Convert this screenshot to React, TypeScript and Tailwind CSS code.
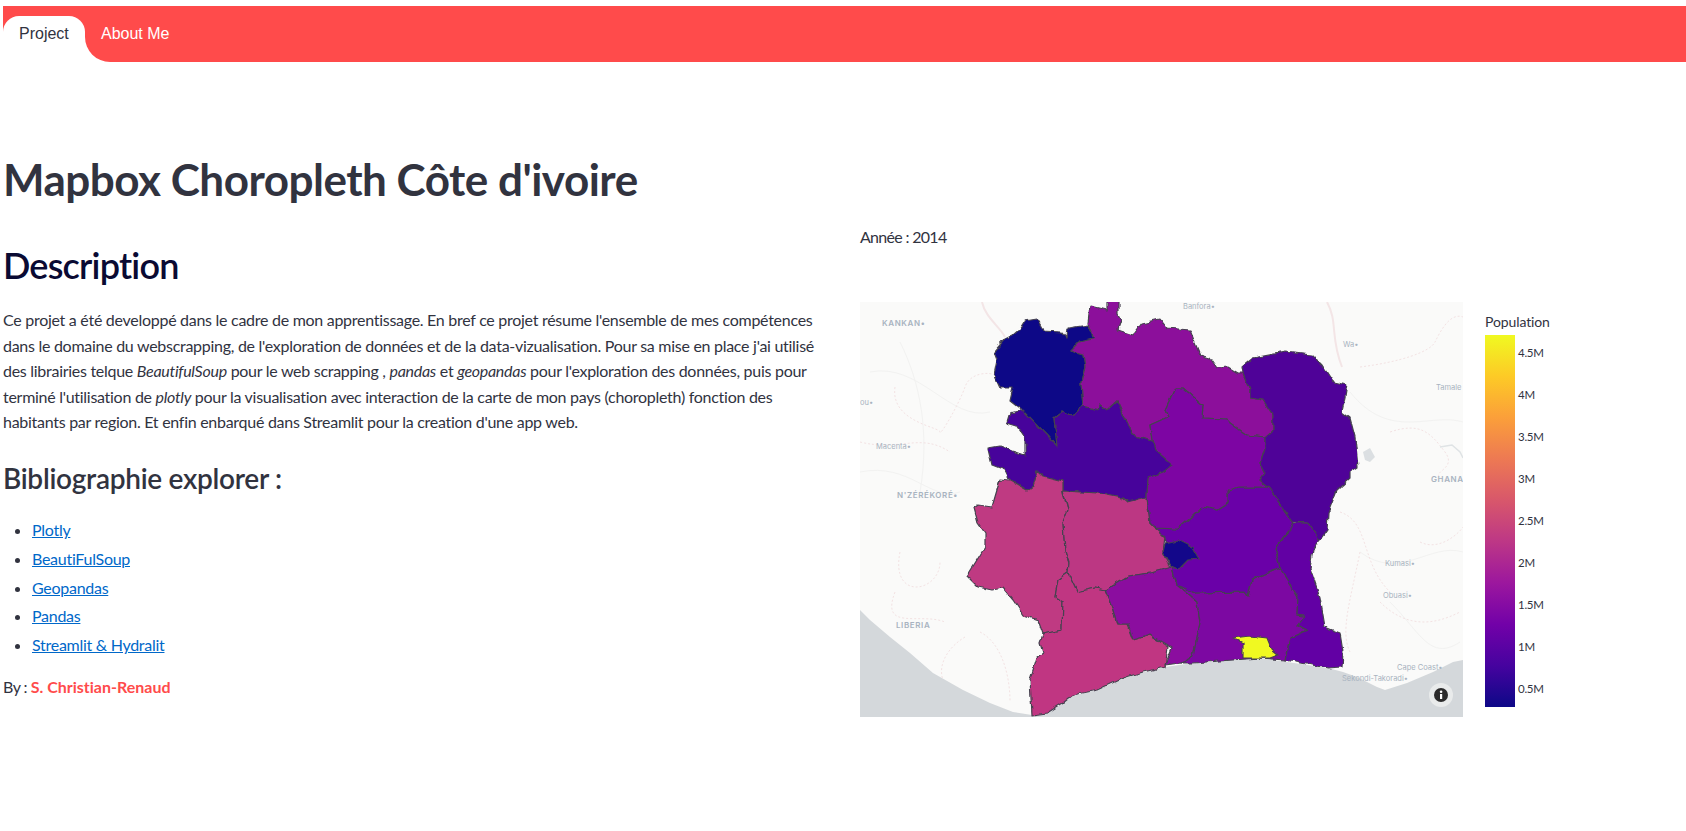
const regions = [
  // north west
  { fill: '#0d0887', points: '145,37 153,33 160,27 165,19 177,17 181,24 183,29 202,30 207,36 208,26 228,23 234,36 220,39 210,49 223,53 225,64 221,81 223,104 213,114 203,109 194,116 197,144 187,133 163,109 150,99 153,86 140,86 134,73 137,58 134,50' },
  // savanes
  { fill: '#8c0f9b', points: '234,36 228,21 230,4 247,8 247,-4 258,-4 258,13 261,19 258,28 273,33 282,21 300,17 307,26 330,28 335,41 340,53 350,56 357,66 368,65 378,71 383,71 390,88 390,96 403,98 413,113 413,128 405,135 387,133 370,121 368,117 342,116 343,103 323,86 315,86 305,108 308,115 290,123 292,138 297,141 273,133 257,99 247,108 240,103 238,108 223,104 221,81 225,64 223,53 210,49 220,39' },
  // woroba
  { fill: '#47039b', points: '150,111 163,108 187,133 197,144 194,116 203,109 213,114 223,104 238,108 240,103 247,108 257,99 273,133 297,141 315,161 312,169 300,171 288,178 287,194 292,205 267,199 262,196 237,191 203,189 203,179 183,174 178,169 173,184 167,188 150,178 145,168 132,163 128,146 140,144 153,149 165,153 165,136 157,124 147,121' },
  // montagnes
  { fill: '#bf3a82', points: '178,169 183,174 203,179 203,191 208,208 203,221 205,248 209,261 208,271 198,278 195,295 203,300 202,328 183,332 178,318 163,313 153,298 143,286 132,288 118,285 107,274 125,245 125,231 118,221 114,206 118,203 132,205 137,188 140,177 150,178 167,188 173,184' },
  // sassandra
  { fill: '#bc3783', points: '203,189 237,191 262,196 267,200 287,195 290,221 295,226 305,233 303,250 310,266 290,271 268,274 245,288 235,286 217,290 208,271 209,261 205,248 203,221 208,208' },
  // bas sassandra
  { fill: '#c03682', points: '208,271 217,290 235,286 245,288 253,308 257,323 267,323 273,338 290,333 308,345 305,365 283,370 263,376 237,388 213,393 203,401 187,411 172,413 170,378 177,355 183,351 180,341 183,332 202,328 203,300 195,295 198,278' },
  // goh djiboua
  { fill: '#8b0d9f', points: '245,288 268,274 290,271 312,265 317,283 337,300 340,321 333,355 320,361 305,363 312,346 290,333 273,338 268,323 257,323 253,308' },
  // lagunes
  { fill: '#7c08a2', points: '322,285 335,291 385,290 388,294 392,278 420,266 438,295 437,313 445,314 438,323 447,328 430,336 425,358 400,356 333,361 320,361 333,355 340,321 337,300 317,283' },
  // comoe
  { fill: '#6200a4', points: '420,266 415,246 428,231 430,221 448,221 460,238 453,248 450,266 460,295 465,325 480,331 483,350 482,365 468,366 425,358 430,336 447,328 438,323 445,314 437,313 438,295' },
  // lacs
  { fill: '#6a00a8', points: '290,221 295,226 318,227 343,205 357,208 368,201 368,188 378,185 408,185 433,220 428,231 415,246 420,266 392,278 388,294 385,290 335,291 322,285 317,283 312,265 305,235' },
  // vallee du bandama
  { fill: '#7d05a3', points: '290,123 308,115 305,108 315,86 323,86 343,103 342,116 368,117 370,121 387,133 405,135 405,146 400,161 405,171 400,178 408,185 378,185 368,188 368,201 357,208 343,205 318,227 295,226 290,221 287,195 288,176 303,170 313,163 295,148 292,138' },
  // zanzan
  { fill: '#4f0298', points: '383,71 382,65 393,56 425,50 452,53 462,63 473,80 487,83 485,95 482,110 490,116 495,135 498,165 490,170 490,176 477,188 468,211 467,228 460,238 448,221 433,220 408,185 400,178 405,171 400,161 405,146 405,135 413,128 413,113 403,98 390,96 390,88' },
  // yamoussoukro
  { fill: '#13078a', points: '303,250 305,241 318,238 332,245 339,257 328,258 318,268 311,265' },
  // abidjan
  { fill: '#f0f921', points: '373,336 390,334 407,336 412,348 418,353 410,356 400,356 383,356 383,341' },
];

const placeLabels = [
  { x: 22, y: 24, text: 'KANKAN•', bold: true },
  { x: 0, y: 103, text: 'ou•' },
  { x: 16, y: 147, text: 'Macenta•' },
  { x: 37, y: 196, text: "N'ZÉRÉKORÉ•", bold: true },
  { x: 36, y: 326, text: 'LIBERIA', bold: true },
  { x: 571, y: 180, text: 'GHANA', bold: true },
  { x: 323, y: 7, text: 'Banfora•' },
  { x: 483, y: 45, text: 'Wa•' },
  { x: 576, y: 88, text: 'Tamale' },
  { x: 525, y: 264, text: 'Kumasi•' },
  { x: 523, y: 296, text: 'Obuasi•' },
  { x: 537, y: 368, text: 'Cape Coast•' },
  { x: 482, y: 379, text: 'Sekondi-Takoradi•' },
];

const ticks = ['4.5M', '4M', '3.5M', '3M', '2.5M', '2M', '1.5M', '1M', '0.5M'];
const links = ['Plotly', 'BeautiFulSoup', 'Geopandas', 'Pandas', 'Streamlit & Hydralit'];

function ChoroplethMap() {
  return (
    <svg viewBox="0 0 603 415" className="block h-[415px] w-[603px] shrink-0 bg-[#fafaf9]">
      <defs>
        {/* rough admin boundaries */}
        <filter id="rough" x="0" y="0" width="603" height="415" filterUnits="userSpaceOnUse" colorInterpolationFilters="sRGB">
          <feTurbulence type="fractalNoise" baseFrequency="0.11" numOctaves="2" seed="4" />
          <feDisplacementMap in="SourceGraphic" scale="5" xChannelSelector="R" yChannelSelector="G" />
        </filter>
      </defs>
      {/* faint roads and borders */}
      <g fill="none" stroke="#f2f2f1" strokeWidth="1">
        <path d="M40 40 C60 80 70 130 60 190 M10 70 C60 60 90 120 130 110 M0 170 C50 160 70 200 100 190 M490 90 C530 140 570 110 603 120 M500 250 C540 280 570 240 603 250 M530 300 C560 330 570 360 600 340" />
      </g>
      <g fill="none" stroke="#f3e2e3" strokeWidth="1" strokeDasharray="2 2">
        <path d="M35 85 C30 120 80 125 80 130 S100 100 105 85 S130 70 135 73 M0 140 C40 150 60 130 90 150 M40 250 C30 300 80 290 80 260 M35 290 C20 330 60 310 85 320 M105 335 C80 350 70 380 100 395 M120 330 C140 340 150 370 150 400" />
        <path d="M500 65 C540 60 570 50 575 40 S590 10 603 15 M530 130 C560 120 570 130 585 150 S560 170 590 180 M480 210 C510 220 500 260 530 290 M520 300 C550 330 580 320 600 310 M500 250 C490 300 480 330 490 350 M560 240 C580 250 600 230 603 225" />
      </g>
      <path d="M122 0 C125 15 140 25 145 35 M467 0 C478 20 470 35 482 65" fill="none" stroke="#f3e5e6" strokeWidth="2" />
      {/* water */}
      <path d="M503 150 L510 146 L515 155 L510 160 L505 158 Z" fill="#dbdfe2" />
      <path d="M580 145 L592 143 L600 150 L603 156" fill="none" stroke="#dfe3e5" strokeWidth="1.5" />
      <path
        d="M0 308 L10 318 L30 335 L50 351 L73 371 L103 388 L130 401 L153 410 L172 413 L187 411 L203 401 L213 393 L237 388 L263 376 L283 370 L305 365 L333 361 L400 356 L468 366 L483 370 L497 375 L517 385 L525 388 L547 381 L573 370 L593 360 L603 358 L603 415 L0 415 Z"
        fill="#d4d8db"
      />
      {placeLabels.map((label) => (
        <text
          key={label.text}
          x={label.x}
          y={label.y}
          fill="#a8b3c0"
          fontFamily="Inter, sans-serif"
          fontSize={label.bold ? 8 : 7.5}
          fontWeight={label.bold ? 600 : 400}
          letterSpacing={label.bold ? 0.6 : 0}
        >
          {label.text}
        </text>
      ))}
      <g filter="url(#rough)">
        {regions.map((region) => (
          <polygon key={region.points} points={region.points} fill={region.fill} stroke="#45424f" strokeWidth="1.2" strokeLinejoin="round" />
        ))}
      </g>
      {/* info button */}
      <circle cx="581" cy="393" r="12" fill="#e9ebeb" />
      <circle cx="581" cy="393" r="7" fill="#2b2b2b" />
      <rect x="580" y="392" width="2.2" height="5" fill="#fff" />
      <circle cx="581.1" cy="389.8" r="1.3" fill="#fff" />
    </svg>
  );
}

function ColorBar() {
  return (
    <div className="ml-[22px] pt-[10px] text-[#31333f]">
      <div className="text-[14px] leading-[20px] tracking-[-0.11px]">Population</div>
      <div className="mt-[3px] flex items-start">
        <div className="h-[372px] w-[30px] bg-[linear-gradient(to_top,#0d0887,#46039f,#7201a8,#9c179e,#bd3786,#d8576b,#ed7953,#fb9f3a,#fdca26,#f0f921)]" />
        <div className="-mt-[3px] ml-[3px] flex flex-col">
          {ticks.map((tick) => (
            <span key={tick} className="h-[42px] text-[11.5px] leading-[42px]">
              {tick}
            </span>
          ))}
        </div>
      </div>
    </div>
  );
}

export default function App() {
  return (
    <div className="min-h-[831px] bg-white font-['Lato','Noto_Sans',sans-serif] text-[16px] tracking-[-0.28px] text-[#31333f] [font-variant-ligatures:none]">
      <nav className="ml-[3px] mt-[6px] h-[56px] bg-[#ff4b4b] pt-[10px] font-['Liberation_Sans',sans-serif] tracking-normal">
        <div className="flex h-full">
          <a className="h-full w-[82px] rounded-t-[16px] bg-white pl-[16px] pt-[8px] leading-[20px] text-[#31333f]">Project</a>
          <div className="flex-1 bg-white">
            <div className="h-full rounded-bl-[25px] bg-[#ff4b4b] pl-[16px] pt-[8px] leading-[20px] text-white">About Me</div>
          </div>
        </div>
      </nav>

      <main className="px-[3px]">
        <h1 className="pt-[87px] text-[44px] font-bold leading-[60px] tracking-[-0.5px]">Mapbox Choropleth Côte d'ivoire</h1>

        <div className="flex">
          <section className="w-[857px] shrink-0">
            <h2 className="pt-[34px] text-[36px] font-semibold leading-[44px] tracking-[-0.8px] text-[#0a0a33]">Description</h2>
            <p className="mt-[20px] leading-[25.6px]">
              Ce projet a été developpé dans le cadre de mon apprentissage. En bref ce projet résume l'ensemble de mes compétences
              <br />
              dans le domaine du webscrapping, de l'exploration de données et de la data-vizualisation. Pour sa mise en place j'ai utilisé
              <br />
              des librairies telque <em>BeautifulSoup</em> pour le web scrapping , <em>pandas</em> et <em>geopandas</em> pour l'exploration des données, puis pour
              <br />
              terminé l'utilisation de <em>plotly</em> pour la visualisation avec interaction de la carte de mon pays (choropleth) fonction des
              <br />
              habitants par region. Et enfin enbarqué dans Streamlit pour la creation d'une app web.
            </p>
            <h3 className="mt-[23px] text-[28px] font-semibold leading-[40px]">Bibliographie explorer :</h3>
            <ul className="mt-[18px] list-disc pl-[29px]">
              {links.map((link) => (
                <li key={link} className="leading-[28.8px]">
                  <a className="text-[#0068c9] underline">{link}</a>
                </li>
              ))}
            </ul>
            <p className="mt-[14px] leading-[25.6px] tracking-[-0.5px]">
              By : <strong className="tracking-normal text-[#ff4b4b]">S. Christian-Renaud</strong>
            </p>
          </section>

          <section>
            <p className="pt-[15px] leading-[25.6px] tracking-[-0.7px]">Année : 2014</p>
            <div className="mt-[52px] flex">
              <ChoroplethMap />
              <ColorBar />
            </div>
          </section>
        </div>
      </main>
    </div>
  );
}
